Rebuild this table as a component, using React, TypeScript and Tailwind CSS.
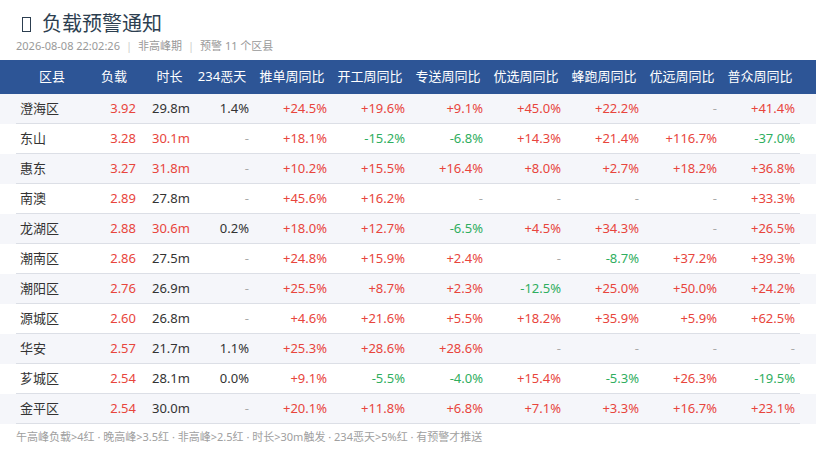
import React from "react";

type Cell = string;
const rows: Cell[][] = [
  ["澄海区", "3.92", "29.8m", "1.4%", "+24.5%", "+19.6%", "+9.1%", "+45.0%", "+22.2%", "-", "+41.4%"],
  ["东山", "3.28", "30.1m", "-", "+18.1%", "-15.2%", "-6.8%", "+14.3%", "+21.4%", "+116.7%", "-37.0%"],
  ["惠东", "3.27", "31.8m", "-", "+10.2%", "+15.5%", "+16.4%", "+8.0%", "+2.7%", "+18.2%", "+36.8%"],
  ["南澳", "2.89", "27.8m", "-", "+45.6%", "+16.2%", "-", "-", "-", "-", "+33.3%"],
  ["龙湖区", "2.88", "30.6m", "0.2%", "+18.0%", "+12.7%", "-6.5%", "+4.5%", "+34.3%", "-", "+26.5%"],
  ["潮南区", "2.86", "27.5m", "-", "+24.8%", "+15.9%", "+2.4%", "-", "-8.7%", "+37.2%", "+39.3%"],
  ["潮阳区", "2.76", "26.9m", "-", "+25.5%", "+8.7%", "+2.3%", "-12.5%", "+25.0%", "+50.0%", "+24.2%"],
  ["源城区", "2.60", "26.8m", "-", "+4.6%", "+21.6%", "+5.5%", "+18.2%", "+35.9%", "+5.9%", "+62.5%"],
  ["华安", "2.57", "21.7m", "1.1%", "+25.3%", "+28.6%", "+28.6%", "-", "-", "-", "-"],
  ["芗城区", "2.54", "28.1m", "0.0%", "+9.1%", "-5.5%", "-4.0%", "+15.4%", "-5.3%", "+26.3%", "-19.5%"],
  ["金平区", "2.54", "30.0m", "-", "+20.1%", "+11.8%", "+6.8%", "+7.1%", "+3.3%", "+16.7%", "+23.1%"],
];

const headers = ["区县", "负载", "时长", "234恶天", "推单周同比", "开工周同比", "专送周同比", "优选周同比", "蜂跑周同比", "优远周同比", "普众周同比"];

const headerPad = [
  "pl-1",
  "px-2",
  "pl-2",
  "px-2",
  "pr-2",
  "pr-2",
  "pr-2",
  "pr-2",
  "pr-2",
  "pr-2",
  "pr-[5px]",
];

const grid = "grid grid-cols-[68px_60px_43px_70px_78px_78px_78px_78px_78px_78px_75px]";

function colorFor(col: number, v: string): string {
  if (v === "-") return "text-[#aaaaaa]";
  if (col === 1) return "text-[#e8453c]";
  if (col === 2) return parseFloat(v) > 30 ? "text-[#e8453c]" : "text-[#333333]";
  if (col === 3) return "text-[#333333]";
  if (v.startsWith("+")) return "text-[#e8453c]";
  if (v.startsWith("-")) return "text-[#2fae60]";
  return "text-[#333333]";
}

function alignFor(col: number): string {
  if (col === 0) return "pl-1 text-left";
  if (col === 2) return "pl-2 text-left";
  if (col === 10) return "pr-[5px] text-right";
  return "pr-2 text-right";
}

export default function App() {
  return (
    <div
      className="w-[816px] h-[470px] bg-white overflow-hidden"
      style={{ fontFamily: '"Noto Sans", "Noto Sans CJK SC", sans-serif' }}
    >
      <div className="pl-[22px] pt-[10px] h-[60px]">
        <div className="flex items-center h-[28px] text-[20px] text-[#2c3e50] leading-none">
          <span className="inline-block w-[9px] h-[15px] border-[1.5px] border-[#2c3e50] mr-[11px]" />
          <span>负载预警通知</span>
        </div>
        <div className="mt-0 ml-[-6px] text-[11px] text-[#999999] leading-[16px]">
          2026-08-08 22:02:26<span className="mx-[6px] text-[#cccccc]">|</span>非高峰期
          <span className="mx-[6px] text-[#cccccc]">|</span>预警 11 个区县
        </div>
      </div>
      <div className="bg-[#2d5596] h-[34px]">
        <div className={`${grid} mx-4 h-full items-center text-[13px] text-white`}>
          {headers.map((h, i) => (
            <div key={h} className={`text-center whitespace-nowrap ${headerPad[i]}`}>
              {h}
            </div>
          ))}
        </div>
      </div>
      {rows.map((r, ri) => (
        <div key={ri} className={ri % 2 === 0 ? "bg-[#f5f6fa]" : "bg-white"}>
          <div className={`${grid} mx-4 h-[30px] items-center border-b border-[#dcdfe6] text-[13px]`}>
            {r.map((v, ci) => (
              <div key={ci} className={`whitespace-nowrap ${alignFor(ci)} ${ci === 0 ? "text-[#333333]" : colorFor(ci, v)}`}>
                {v}
              </div>
            ))}
          </div>
        </div>
      ))}
      <div className="pl-4 pt-[5px] text-[11px] text-[#a0a0a0] leading-[16px]">
        午高峰负载&gt;4红 · 晚高峰&gt;3.5红 · 非高峰&gt;2.5红 · 时长&gt;30m触发 · 234恶天&gt;5%红 · 有预警才推送
      </div>
    </div>
  );
}
